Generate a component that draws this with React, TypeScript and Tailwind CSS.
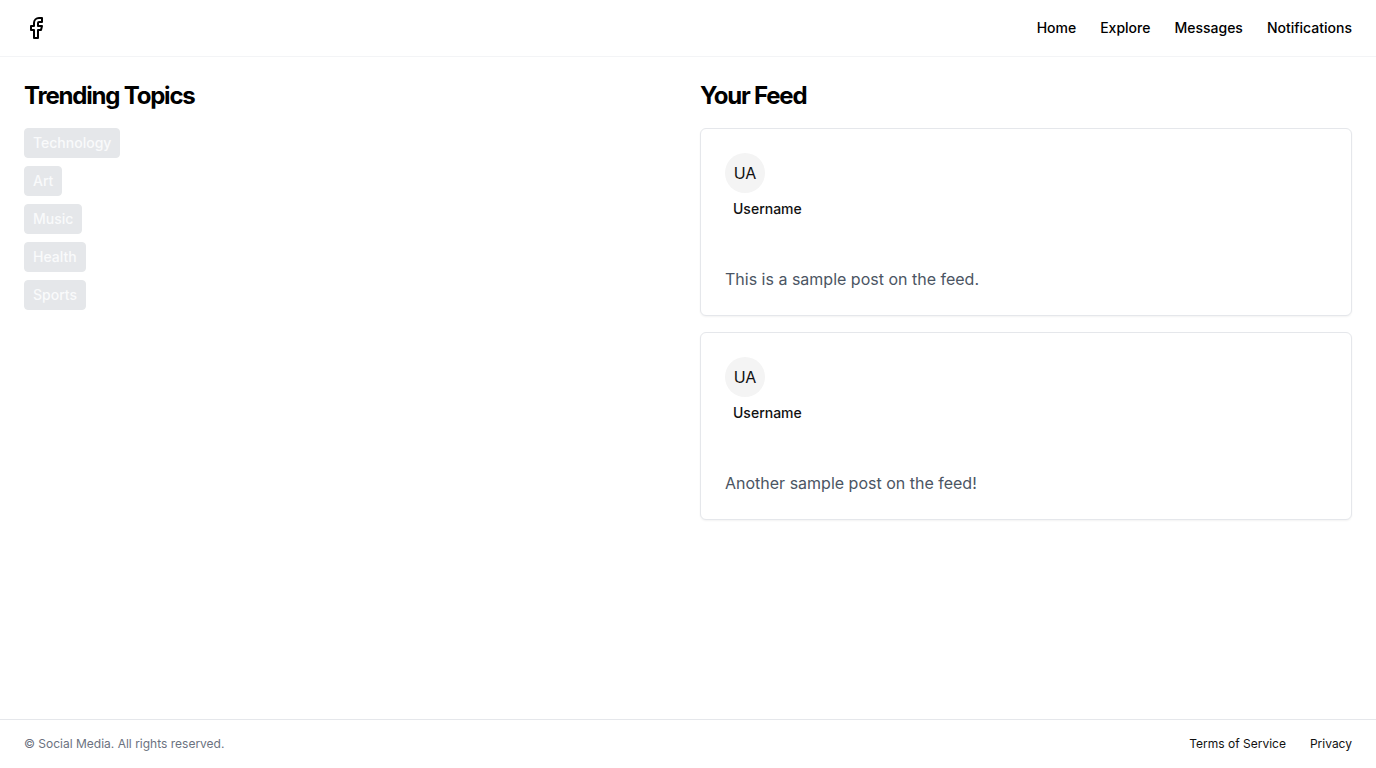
import { Facebook } from "lucide-react";

const links = ["Home", "Explore", "Messages", "Notifications"];
const topics = ["Technology", "Art", "Music", "Health", "Sports"];
const posts = [
  { id: 1, user: "Username", initials: "UA", text: "This is a sample post on the feed." },
  { id: 2, user: "Username", initials: "UA", text: "Another sample post on the feed!" },
];

function Header() {
  return (
    <header className="flex h-14 items-center px-6 text-black shadow-[0_1px_0_#f3f4f6]">
      <a href="#" aria-label="Social Media">
        <Facebook className="h-6 w-6" />
      </a>
      <nav className="ml-auto flex gap-6">
        {links.map((link) => (
          <a key={link} href="#" className="text-sm font-medium">
            {link}
          </a>
        ))}
      </nav>
    </header>
  );
}

function Topics() {
  return (
    <section>
      <h2 className="mb-4 text-2xl font-bold tracking-tighter text-black">Trending Topics</h2>
      <div className="flex flex-col items-start gap-2">
        {topics.map((topic) => (
          <button
            key={topic}
            type="button"
            className="rounded-[4px] border border-[#e5e7ea] bg-[#e5e7ea] px-2 py-1 text-sm font-medium text-[#f9fafb]"
          >
            {topic}
          </button>
        ))}
      </div>
    </section>
  );
}

function Feed() {
  return (
    <section>
      <h2 className="mb-4 text-2xl font-bold tracking-tighter text-black">Your Feed</h2>
      <div className="flex flex-col gap-4">
        {posts.map((post) => (
          <article key={post.id} className="rounded-md border border-[#e5e7eb] bg-white shadow-xs">
            <div className="p-6">
              <span className="flex h-10 w-10 items-center justify-center rounded-full bg-[#f4f4f4]">
                {post.initials}
              </span>
              <h3 className="mt-1.5 ml-2 text-sm font-medium">{post.user}</h3>
            </div>
            <p className="p-6 text-base text-[#4b5563]">{post.text}</p>
          </article>
        ))}
      </div>
    </section>
  );
}

export default function App() {
  return (
    <div className="flex min-h-screen flex-col bg-white font-['Inter',sans-serif] text-[#111111]">
      <Header />
      <main className="grid flex-1 grid-cols-2 content-start gap-6 p-6">
        <Topics />
        <Feed />
      </main>
      <footer className="flex items-center justify-between border-t border-[#e5e7eb] px-6 py-4 text-xs">
        <p className="text-[#6b7280]">© Social Media. All rights reserved.</p>
        <nav className="flex gap-6">
          <a href="#">Terms of Service</a>
          <a href="#">Privacy</a>
        </nav>
      </footer>
    </div>
  );
}
